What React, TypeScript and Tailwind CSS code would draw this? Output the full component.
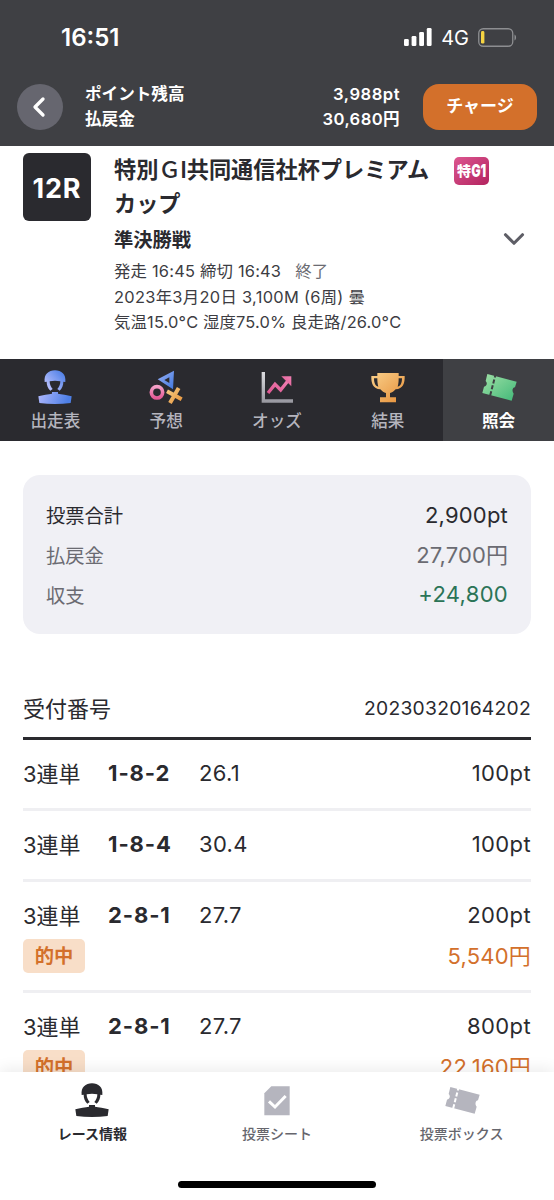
import React from 'react';
import { ChevronLeft, ChevronDown } from 'lucide-react';

const RiderIcon = ({ fill }: { fill: string }) => (
  <svg width="34" height="35" viewBox="0 0 102 105">
    <defs>
      <linearGradient id="rider" gradientUnits="userSpaceOnUse" x1="10" y1="60" x2="90" y2="90">
        <stop offset="0" stopColor="#a9b4fb" />
        <stop offset="1" stopColor="#4d7fe6" />
      </linearGradient>
      <linearGradient id="helmet" gradientUnits="userSpaceOnUse" x1="25" y1="50" x2="75" y2="5">
        <stop offset="0" stopColor="#b9c0fd" />
        <stop offset="1" stopColor="#4d7fe6" />
      </linearGradient>
    </defs>
    <path
      fill={fill === 'url(#rider)' ? 'url(#helmet)' : fill}
      d="M20 36C17 13 32 1 51 1S85 13 82 36L76 35C76 45 73 54 65 62L58 57C64 50 67 43 67 34C56 32 46 32 35 34C35 43 38 50 44 57L37 62C29 54 26 45 26 35Z"
    />
    <path fill={fill} d="M1 79C14 74 32 73 42 71V66H60V71C70 73 88 74 101 79L98 99C68 103 34 103 4 99Z" />
  </svg>
);

const PredictIcon = () => (
  <svg width="34" height="35" viewBox="0 0 102 105">
    <defs>
      <linearGradient id="tri" x1="0" y1="0" x2="1" y2="1">
        <stop offset="0" stopColor="#9ab2f6" />
        <stop offset="1" stopColor="#3f76dd" />
      </linearGradient>
      <linearGradient id="ring" x1="0" y1="0" x2="0" y2="1">
        <stop offset="0" stopColor="#f3a0c6" />
        <stop offset="1" stopColor="#e45a96" />
      </linearGradient>
      <linearGradient id="cross" x1="0" y1="0" x2="1" y2="1">
        <stop offset="0" stopColor="#f6cd85" />
        <stop offset="1" stopColor="#e8953d" />
      </linearGradient>
    </defs>
    <path d="M26 28L75 2L72 58ZM46 30L61 39V22Z" fill="url(#tri)" fillRule="evenodd" />
    <circle cx="24" cy="67" r="17" fill="none" stroke="url(#ring)" strokeWidth="11" />
    <path d="M54 64L98 88M89 54L63 99" fill="none" stroke="url(#cross)" strokeWidth="12" />
  </svg>
);

const OddsIcon = () => (
  <svg width="34" height="35" viewBox="0 0 102 105">
    <defs>
      <linearGradient id="axis" x1="0" y1="0" x2="0" y2="1">
        <stop offset="0" stopColor="#dcdce0" />
        <stop offset="1" stopColor="#97979f" />
      </linearGradient>
      <linearGradient id="arrow" x1="0" y1="1" x2="1" y2="0">
        <stop offset="0" stopColor="#df5791" />
        <stop offset="1" stopColor="#f07fb2" />
      </linearGradient>
    </defs>
    <path d="M5 6H15V88H99V98H5Z" fill="url(#axis)" />
    <path d="M24 69L45 43L62 60L84 32" fill="none" stroke="url(#arrow)" strokeWidth="10" />
    <path d="M64 19H94V49Z" fill="url(#arrow)" />
  </svg>
);

const TrophyIcon = () => (
  <svg width="34" height="35" viewBox="0 0 102 105">
    <defs>
      <linearGradient id="cup" x1="0" y1="0" x2="1" y2="1">
        <stop offset="0" stopColor="#f9cf8a" />
        <stop offset="1" stopColor="#e68f38" />
      </linearGradient>
    </defs>
    <path
      fill="url(#cup)"
      fillRule="evenodd"
      d="M19 9H83V18H101C102 39 96 57 74 58C69 64 63 68 57 69V82H75V97H27V82H45V69C39 68 33 64 28 58C6 57 0 39 1 18H19ZM9 25C9 39 13 49 22 50C20 43 19 35 19 25ZM93 25H83C83 35 82 43 80 50C89 49 93 39 93 25Z"
    />
  </svg>
);

const TicketIcon = ({ fill, gap }: { fill: string; gap: string }) => (
  <svg width="36" height="35" viewBox="0 0 108 105">
    <defs>
      <linearGradient id="ticket" x1="0" y1="0" x2="1" y2="1">
        <stop offset="0" stopColor="#9fe0a6" />
        <stop offset="1" stopColor="#41b878" />
      </linearGradient>
    </defs>
    <path
      fill={fill}
      d="M19 12L107 35L102 52C94 53 92 64 98 71L92 92L4 69L9 50C18 48 20 39 14 33Z"
    />
    <path d="M43 16L27 78" stroke={gap} strokeWidth="6" strokeDasharray="7 6 12 6 12 6 14" />
  </svg>
);

const SheetIcon = () => (
  <svg width="26" height="30" viewBox="0 0 78 90">
    <path d="M22 1H77V88H1V22Z" fill="#b5b5be" />
    <path d="M15 46L33 63L65 30" fill="none" stroke="#fff" strokeWidth="9" />
  </svg>
);

const GradeBadge = () => (
  <svg width="35" height="28" viewBox="0 0 35 28" className="mt-1">
    <defs>
      <linearGradient id="grade" x1="0" y1="0" x2="1" y2="1">
        <stop offset="0" stopColor="#dc5690" />
        <stop offset="1" stopColor="#b3245f" />
      </linearGradient>
    </defs>
    <rect width="35" height="28" rx="5" fill="url(#grade)" />
    <text x="3" y="19.4" fontSize="14" fontWeight="900" fill="#fff">特</text>
    <text x="17.2" y="20" fontSize="17" fontWeight="900" fill="#fff" textLength="15" lengthAdjust="spacingAndGlyphs">
      G1
    </text>
  </svg>
);

const tabs = [
  { label: '出走表', icon: <RiderIcon fill="url(#rider)" /> },
  { label: '予想', icon: <PredictIcon /> },
  { label: 'オッズ', icon: <OddsIcon /> },
  { label: '結果', icon: <TrophyIcon /> },
  { label: '照会', icon: <TicketIcon fill="url(#ticket)" gap="#3f4044" />, active: true },
];

const bets = [
  { numbers: '1-8-2', odds: '26.1', stake: '100pt' },
  { numbers: '1-8-4', odds: '30.4', stake: '100pt' },
  { numbers: '2-8-1', odds: '27.7', stake: '200pt', payout: '5,540円' },
  { numbers: '2-8-1', odds: '27.7', stake: '800pt', payout: '22,160円' },
];

const Header = () => (
  <header className="h-[146px] shrink-0 bg-[#3f4044] text-white">
    {/* Status bar */}
    <div className="flex h-[74px] items-center justify-between pl-[61px] pr-[37px]">
      <span className="pt-0.5 text-[24px] font-semibold leading-6">16:51</span>
      <div className="flex items-center">
        <svg width="28" height="18" viewBox="0 0 28 18" fill="#fff">
          <rect x="0" y="11" width="4.8" height="7" rx="1.3" />
          <rect x="7.6" y="8" width="4.8" height="10" rx="1.3" />
          <rect x="15.2" y="4" width="4.8" height="14" rx="1.3" />
          <rect x="22.8" y="0" width="4.8" height="18" rx="1.3" />
        </svg>
        <span className="ml-[9px] pt-0.5 text-[20px] leading-6">4G</span>
        <svg className="ml-[9px]" width="39" height="19" viewBox="0 0 39 19">
          <rect x="0.75" y="0.75" width="34" height="17.5" rx="4.5" fill="none" stroke="#8d8e91" strokeWidth="1.3" />
          <rect x="3" y="3" width="3.4" height="12.6" rx="1.4" fill="#f6d442" />
          <path d="M36.5 6.5C38.6 7.5 38.6 11.5 36.5 12.5Z" fill="#8d8e91" />
        </svg>
      </div>
    </div>
    <div className="flex h-[66px] items-center px-[17px]">
      <button className="flex h-[46px] w-[46px] items-center justify-center rounded-full bg-[#66666f]">
        <ChevronLeft size={32} strokeWidth={2.5} className="mr-0.5" />
      </button>
      <div className="ml-[22px] flex flex-1 flex-col text-[16.6px] font-semibold leading-[25.5px]">
        <div className="flex justify-between">
          <span>ポイント残高</span>
          <span className="tracking-[0.5px]">3,988pt</span>
        </div>
        <div className="flex justify-between">
          <span>払戻金</span>
          <span className="tracking-[0.4px]">30,680円</span>
        </div>
      </div>
      <button className="ml-[23px] h-[46px] w-[114px] rounded-[16px] bg-[#d3702b] text-[17px] font-bold">
        チャージ
      </button>
    </div>
  </header>
);

const RaceInfo = () => (
  <section className="flex h-[213px] shrink-0 pl-[23px] pt-[7px]">
    <div className="flex h-[68px] w-[68px] shrink-0 items-center justify-center rounded-[6px] bg-[#2a2a2f] pt-1 text-[27px] font-bold tracking-[0.8px] text-white">
      12R
    </div>
    <div className="ml-[23px] w-[340px] shrink-0 whitespace-nowrap">
      <h1 className="text-[22.2px] font-semibold leading-[34px]">
        <span>特別</span>
        <span className="font-medium">Ｇ</span>I共同通信社杯プレミアム
        <br />
        カップ
      </h1>
      <h2 className="mt-px text-[19.3px] font-semibold leading-[36px]">準決勝戦</h2>
      <div className="mt-px text-[16.4px] leading-[25.7px] text-[#3c3c42]">
        <p className="tracking-[0.2px]">
          発走 16:45 締切 16:43<span className="ml-3.5 text-[#6b6b72]">終了</span>
        </p>
        <p className="tracking-[0.3px]">2023年3月20日 3,100M (6周) 曇</p>
        <p className="tracking-[0.15px]">気温15.0°C 湿度75.0% 良走路/26.0°C</p>
      </div>
    </div>
    <div className="flex flex-1 flex-col">
      <GradeBadge />
      <ChevronDown size={34} strokeWidth={2.2} className="ml-[43px] mt-[37px] text-[#5e5e66]" />
    </div>
  </section>
);

const Summary = () => (
  <section className="mx-[23px] mt-[34px] flex h-[159px] shrink-0 flex-col justify-center rounded-[17px] bg-[#f0f0f5] px-[23px] text-[19.3px] leading-[40px]">
    <div className="flex h-10 justify-between">
      <span className="pt-px">投票合計</span>
      <span className="text-[22px] tracking-[0.2px]">2,900pt</span>
    </div>
    <div className="flex h-10 justify-between text-[#6b6b72]">
      <span className="pt-px">払戻金</span>
      <span className="text-[22px] tracking-[0.1px]">27,700円</span>
    </div>
    <div className="flex h-10 justify-between text-[#6b6b72]">
      <span className="pt-px">収支</span>
      <span className="text-[22px] leading-[39px] tracking-[0.3px] text-[#2b7457]">+24,800</span>
    </div>
  </section>
);

const BetList = () => (
  <section className="mx-[23px] mt-[54px]">
    <div className="flex h-[52px] items-start justify-between border-b-[3px] border-[#2a2a2f] leading-[40px]">
      <h3 className="pt-px text-[22px]">受付番号</h3>
      <span className="text-[19.3px] tracking-[0.25px]">20230320164202</span>
    </div>
    {bets.map((bet, i) => (
      <div key={i} className="border-b-[3px] border-[#efeff2] pb-[17px] pt-[17px] text-[22px] leading-[32px]">
        <div className="flex h-[34px]">
          <span className="w-[85px] pt-px">3連単</span>
          <span className="w-[91px] font-bold tracking-[0.9px]">{bet.numbers}</span>
          <span className="tracking-[0.3px]">{bet.odds}</span>
          <span className="ml-auto tracking-[0.4px]">{bet.stake}</span>
        </div>
        {bet.payout && (
          <div className="mt-[6px] flex justify-between leading-[34px] text-[#d3702b]">
            <span className="h-[34px] w-[62px] rounded-[5px] bg-[#f8dec8] text-center text-[19.3px] font-semibold">
              的中
            </span>
            <span className="tracking-[0.2px]">{bet.payout}</span>
          </div>
        )}
      </div>
    ))}
  </section>
);

const BottomNav = () => (
  <nav className="relative flex h-[128px] shrink-0 flex-col bg-white shadow-[0_-3px_14px_rgba(0,0,0,0.08)]">
    <div className="grid grid-cols-3 text-[14px] font-medium text-[#66666d]">
      <div className="flex flex-col items-center pt-[11px] text-[#2a2a2f]">
        <RiderIcon fill="#2a2a2f" />
        <span className="mt-[6px] font-semibold leading-5">レース情報</span>
      </div>
      <div className="flex flex-col items-center pt-[11px]">
        <div className="flex h-[35px] items-center">
          <SheetIcon />
        </div>
        <span className="mt-[6px] leading-5">投票シート</span>
      </div>
      <div className="flex flex-col items-center pt-[11px]">
        <TicketIcon fill="#b5b5be" gap="#fff" />
        <span className="mt-[6px] leading-5">投票ボックス</span>
      </div>
    </div>
    <div className="mx-auto mt-auto mb-[12px] h-[7px] w-[198px] rounded-full bg-black" />
  </nav>
);

const App = () => {
  return (
    <div className="flex h-[1200px] w-[554px] flex-col overflow-hidden bg-white font-['Inter','Noto_Sans_CJK_JP',sans-serif] text-[#2a2a2f]">
      <Header />
      <RaceInfo />
      <div className="grid h-[82px] shrink-0 grid-cols-5 bg-[#2a2a2f]">
        {tabs.map((tab) => (
          <div
            key={tab.label}
            className={`flex flex-col items-center pt-[11px] text-[16.6px] ${tab.active ? 'bg-[#3f4044] font-semibold text-white' : 'font-medium text-[#b5b5be]'}`}
          >
            {tab.icon}
            <span className="mt-1 leading-6">{tab.label}</span>
          </div>
        ))}
      </div>
      <main className="flex min-h-0 flex-1 flex-col overflow-hidden">
        <Summary />
        <BetList />
      </main>
      <BottomNav />
    </div>
  );
};

export default App;
